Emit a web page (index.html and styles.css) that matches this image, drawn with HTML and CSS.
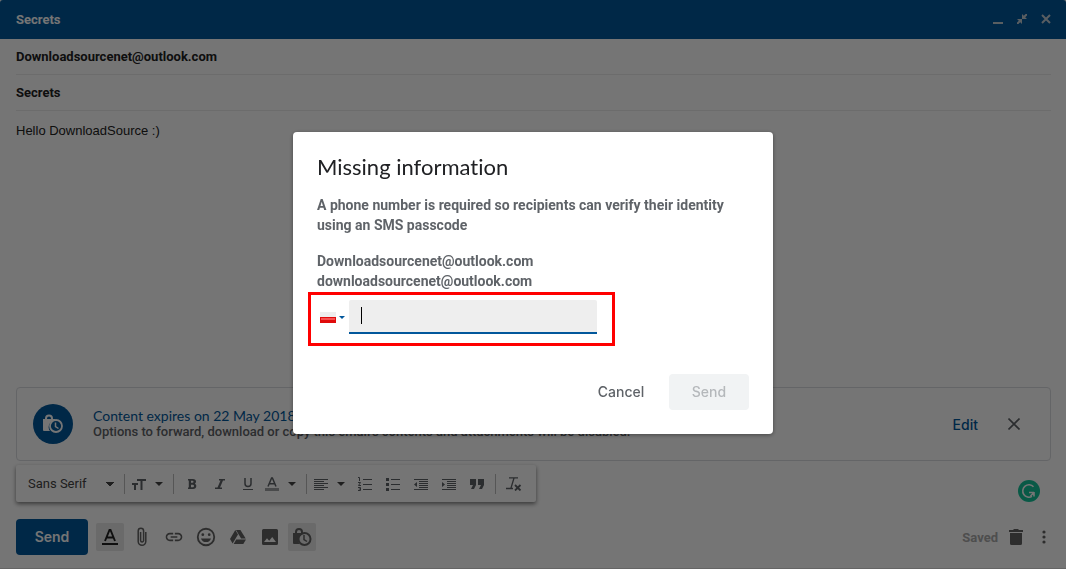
FILE: index.html
```html
<!DOCTYPE html>
<html lang="en">

<head>
    <meta charset="UTF-8">
    <meta name="viewport" content="width=device-width, initial-scale=1.0">
    <title>Secrets</title>
    <link rel="stylesheet" href="styles.css">
</head>

<body>
    <div class="compose">
        <div class="compose-header">
            <h1 class="compose-title">Secrets</h1>
            <div class="window-buttons">
                <button type="button" class="window-btn" aria-label="Minimise">
                    <svg width="10" height="10" viewBox="0 0 10 10"><path d="M0 8h10v2H0z"/></svg>
                </button>
                <button type="button" class="window-btn" aria-label="Exit full screen">
                    <svg width="10" height="10" viewBox="0 0 10 10"><path d="M5 0v5h5L8.200 3.200 10 1.400V0H8.600L6.800 1.800zM5 10V5H0l1.800 1.800L0 8.600V10h1.400l1.800-1.800z"/></svg>
                </button>
                <button type="button" class="window-btn" aria-label="Close">
                    <svg width="10" height="10" viewBox="0 0 10 10"><path d="M1 1l8 8M9 1L1 9" stroke="currentColor" stroke-width="2"/></svg>
                </button>
            </div>
        </div>

        <div class="compose-main">
            <div class="field">Downloadsourcenet@outlook.com</div>
            <div class="field">Secrets</div>
            <div class="message">Hello DownloadSource :)</div>

            <!-- confidential mode -->
            <div class="expiry">
                <div class="expiry-icon">
                    <svg width="22" height="22" viewBox="0 0 22 22">
                        <path d="M1 6h2V5.500a4 4 0 0 1 8 0V6h2v1.200A6.800 6.800 0 0 0 8 18H2a1 1 0 0 1-1-1zM5 6h4v-.5a2 2 0 0 0-4 0z"/>
                        <circle cx="14" cy="13" r="6" fill="none" stroke="currentColor" stroke-width="1.800"/>
                        <path d="M13.500 9.500v4l3 2" fill="none" stroke="currentColor" stroke-width="1.500"/>
                    </svg>
                </div>
                <div class="expiry-text">
                    <p class="expiry-date">Content expires on 22 May 2018.</p>
                    <p class="expiry-note">Options to forward, download or copy this email's contents and attachments will be disabled.</p>
                </div>
                <button type="button" class="expiry-edit">Edit</button>
                <button type="button" class="expiry-close" aria-label="Remove">
                    <svg width="12" height="12" viewBox="0 0 12 12"><path d="M.5.5l11 11M11.500.5l-11 11" stroke="currentColor" stroke-width="1.600"/></svg>
                </button>
            </div>

            <div class="format-row">
                <div class="format-bar">
                    <select class="font-select" aria-label="Font">
                        <option>Sans Serif</option>
                    </select>
                    <span class="sep"></span>
                    <button type="button" class="tool tool-drop tool-size" aria-label="Size">
                        <svg width="14" height="12" viewBox="0 0 14 12"><path d="M5 1h9v2h-3.500v9h-2V3H5zM0 5h6v2H4v5H2V7H0z"/></svg>
                        <span class="arrow"></span>
                    </button>
                    <span class="sep"></span>
                    <button type="button" class="tool tool-bold" aria-label="Bold">
                        <svg width="10" height="12" viewBox="0 0 10 12"><path fill-rule="evenodd" d="M1 1h4.800C8 1 9 2.200 9 3.600c0 1-.5 1.700-1.200 2.100.9.4 1.500 1.200 1.500 2.300C9.300 9.800 8 11 6 11H1V9.500h.8v-7H1zM4 2.800v2h1.500a1 1 0 0 0 0-2zM4 6.800v2.400h1.800a1.200 1.200 0 0 0 0-2.400z"/></svg>
                    </button>
                    <button type="button" class="tool" aria-label="Italic">
                        <svg width="10" height="12" viewBox="0 0 10 12"><path d="M4 1h6v1.500H8L5 9.500h2V11H0V9.500h2.500l3-7H4z"/></svg>
                    </button>
                    <button type="button" class="tool" aria-label="Underline">
                        <svg width="10" height="12" viewBox="0 0 10 12"><path d="M0 11h10v1H0z"/><path d="M2 0v5.500a3 3 0 0 0 6 0V0" fill="none" stroke="currentColor" stroke-width="1.500"/></svg>
                    </button>
                    <button type="button" class="tool tool-drop tool-color" aria-label="Text colour">
                        <svg width="14" height="14" viewBox="0 0 14 14"><path d="M0 11h14v3H0z" opacity=".6"/><path d="M3 9.500L6.600 1h.8L11 9.500M4.200 6.800h5.600" fill="none" stroke="currentColor" stroke-width="1.500"/></svg>
                        <span class="arrow"></span>
                    </button>
                    <span class="sep"></span>
                    <button type="button" class="tool tool-drop" aria-label="Align">
                        <svg width="14" height="12" viewBox="0 0 14 12"><path d="M0 1h14v1H0zM0 3h10v1H0zM0 5h14v1H0zM0 7h10v1H0zM0 9h14v1H0zM0 11h10v1H0z"/></svg>
                        <span class="arrow"></span>
                    </button>
                    <button type="button" class="tool" aria-label="Numbered list">
                        <svg width="14" height="14" viewBox="0 0 14 14"><path d="M5 2h9v1H5zM5 7h9v1H5zM5 12h9v1H5z"/><path d="M0 .5h1.500V4M0 5.500h2.500L.5 8.500H3M0 10.500h2.500v3H0M.8 12h1.700" fill="none" stroke="currentColor"/></svg>
                    </button>
                    <button type="button" class="tool" aria-label="Bulleted list">
                        <svg width="14" height="14" viewBox="0 0 14 14"><path d="M0 1h3v3H0zM0 6h3v3H0zM0 11h3v3H0zM5 2h9v1H5zM5 7h9v1H5zM5 12h9v1H5z"/></svg>
                    </button>
                    <button type="button" class="tool" aria-label="Indent less">
                        <svg width="14" height="12" viewBox="0 0 14 12"><path d="M0 1h14v1H0zM5 3h9v1H5zM5 5h9v1H5zM5 7h9v1H5zM5 9h9v1H5zM0 11h14v1H0zM3 4v5L0 6.500z"/></svg>
                    </button>
                    <button type="button" class="tool" aria-label="Indent more">
                        <svg width="14" height="12" viewBox="0 0 14 12"><path d="M0 1h14v1H0zM5 3h9v1H5zM5 5h9v1H5zM5 7h9v1H5zM5 9h9v1H5zM0 11h14v1H0zM0 4v5l3-2.500z"/></svg>
                    </button>
                    <button type="button" class="tool" aria-label="Quote">
                        <svg width="14" height="12" viewBox="0 0 14 12"><path d="M0 1h6v6l-2 4H1l2-4H0zM8 1h6v6l-2 4H9l2-4H8z"/></svg>
                    </button>
                    <span class="sep sep-clear"></span>
                    <button type="button" class="tool" aria-label="Remove formatting">
                        <svg width="16" height="14" viewBox="0 0 16 14"><path d="M3 .8h9M8 1L5 11M0 11.500h7" fill="none" stroke="currentColor" stroke-width="1.300"/><path d="M9 8l5.500 5.500M14.500 8L9 13.500" stroke="currentColor" stroke-width="1.800"/></svg>
                    </button>
                </div>
                <button type="button" class="checker" aria-label="Check writing">
                    <svg width="22" height="22" viewBox="0 0 22 22"><circle cx="11" cy="11" r="11" fill="#15c39a"/><path d="M15.500 6.800A6.200 6.200 0 1 0 14 16.400" fill="none" stroke="#fff" stroke-width="1.600"/><path d="M11 12.500h5M16 12v4.500M16 12.500l-3.500 3.500" fill="none" stroke="#fff" stroke-width="1.600"/></svg>
                </button>
            </div>

            <div class="actions">
                <button type="button" class="send">Send</button>
                <div class="action-icons">
                    <button type="button" class="action active dark" aria-label="Formatting options">
                        <svg width="16" height="18" viewBox="0 0 16 18"><path d="M0 15h16v2H0z"/><path d="M3 13L7.500 2h1L13 13M4.500 9.500h7" fill="none" stroke="currentColor" stroke-width="1.900"/></svg>
                    </button>
                    <button type="button" class="action" aria-label="Attach files">
                        <svg width="10" height="20" viewBox="0 0 10 20"><path d="M8.800 5v9.500a3.800 3.800 0 0 1-7.600 0V4a2.700 2.700 0 0 1 5.400 0v9.500a1.500 1.500 0 0 1-3 0V5" fill="none" stroke="currentColor" stroke-width="1.500"/></svg>
                    </button>
                    <button type="button" class="action" aria-label="Insert link">
                        <svg width="20" height="20" viewBox="0 0 24 24"><path d="M3.900 12c0-1.710 1.390-3.100 3.100-3.100h4V7H7c-2.760 0-5 2.240-5 5s2.240 5 5 5h4v-1.900H7c-1.710 0-3.100-1.390-3.100-3.100zM8 13h8v-2H8v2zm9-6h-4v1.900h4c1.710 0 3.100 1.390 3.100 3.100s-1.390 3.100-3.100 3.100h-4V17h4c2.760 0 5-2.240 5-5s-2.240-5-5-5z"/></svg>
                    </button>
                    <button type="button" class="action" aria-label="Insert emoji">
                        <svg width="22" height="22" viewBox="0 0 24 24"><circle cx="12" cy="12" r="9" fill="none" stroke="currentColor" stroke-width="2"/><circle cx="8.500" cy="9.500" r="1.500"/><circle cx="15.500" cy="9.500" r="1.500"/><path d="M6.500 13.500h11a5.800 5.800 0 0 1-11 0z"/></svg>
                    </button>
                    <button type="button" class="action" aria-label="Insert from Drive">
                        <svg width="16" height="14" viewBox="0 0 16 14"><path d="M5.300 0L0 9l2.600 4.500L8 4.500zM6 0h4.400l5.300 8.500h-4.600zM6.200 9.500H16L13.300 14H3.700z"/></svg>
                    </button>
                    <button type="button" class="action" aria-label="Insert photo">
                        <svg width="16" height="16" viewBox="0 0 16 16"><path fill-rule="evenodd" d="M1.500 0h13A1.500 1.500 0 0 1 16 1.500v13a1.500 1.500 0 0 1-1.500 1.500h-13A1.500 1.500 0 0 1 0 14.500v-13A1.500 1.500 0 0 1 1.500 0zM2 13h12l-3.800-5-3 3.800L5 9.300z"/></svg>
                    </button>
                    <button type="button" class="action active" aria-label="Confidential mode">
                        <svg width="20" height="20" viewBox="0 0 20 20">
                            <path d="M1 6h2V5a4 4 0 0 1 8 0v1h2v1A6.500 6.500 0 0 0 7.500 17H2a1 1 0 0 1-1-1zM5 6h4V5a2 2 0 0 0-4 0z"/>
                            <circle cx="12.500" cy="12" r="6" fill="none" stroke="currentColor" stroke-width="2"/>
                            <path d="M12 8v4.500l3 2" fill="none" stroke="currentColor" stroke-width="1.500"/>
                        </svg>
                    </button>
                </div>
                <span class="saved">Saved</span>
                <button type="button" class="action" aria-label="Discard draft">
                    <svg width="14" height="16" viewBox="0 0 14 16"><path d="M0 1h4l1-1h4l1 1h4v2H0zM1 4h12v10.500a1.500 1.500 0 0 1-1.500 1.500h-9A1.500 1.500 0 0 1 1 14.500z"/></svg>
                </button>
                <button type="button" class="action more" aria-label="More options">
                    <svg width="4" height="14" viewBox="0 0 4 14"><circle cx="2" cy="2" r="1.600"/><circle cx="2" cy="7" r="1.600"/><circle cx="2" cy="12" r="1.600"/></svg>
                </button>
            </div>
        </div>
    </div>

    <!-- dialog -->
    <div class="mask">
        <div class="dialog" role="dialog" aria-labelledby="dialog-title">
            <h2 id="dialog-title" class="dialog-title">Missing information</h2>
            <p class="dialog-text">A phone number is required so recipients can verify their identity using an SMS passcode</p>
            <label for="phone" class="dialog-text recipient">Downloadsourcenet@outlook.com<br>downloadsourcenet@outlook.com</label>
            <div class="phone-row">
                <button type="button" class="country" aria-label="Country">
                    <svg width="16" height="11" viewBox="0 0 16 11"><path fill="#eee" d="M0 0h16v5H0z"/><path fill="#e00b0b" d="M0 5h16v6H0z"/><path fill="#f75050" d="M1 6h14v2H1z"/></svg>
                    <span class="country-arrow"></span>
                </button>
                <div class="phone-box">
                    <input type="tel" id="phone" class="phone-input">
                    <span class="caret"></span>
                </div>
            </div>
            <div class="dialog-buttons">
                <button type="button" class="dialog-btn">Cancel</button>
                <button type="button" class="dialog-btn dialog-send" disabled>Send</button>
            </div>
        </div>
    </div>
</body>

</html>
```

FILE: styles.css
```css
* {
    box-sizing: border-box;
}

body,
h1,
h2,
p {
    margin: 0;
}

body {
    font-family: Roboto, "Liberation Sans", sans-serif;
    font-size: 13px;
    color: #222;
    background: #fff;
}

button {
    margin: 0;
    padding: 0;
    border: none;
    background: none;
    font-family: inherit;
    color: inherit;
}

svg {
    display: block;
    flex: none;
    fill: currentColor;
}

.compose {
    display: flex;
    flex-direction: column;
    min-height: 100vh;
    border-bottom: 1px solid #ddd;
}

.compose-header {
    display: flex;
    justify-content: space-between;
    align-items: center;
    height: 39px;
    padding: 0 15px 1px 16px;
    background: #01579b;
    color: #fff;
    border-radius: 3px 3px 0 0;
}

.compose-title {
    font-size: 13px;
    font-weight: 700;
}

.window-buttons {
    display: flex;
    gap: 14px;
    color: #c3ccd4;
}

.compose-main {
    display: flex;
    flex-direction: column;
    flex: 1;
    padding: 0 15px 13px 16px;
}

.field {
    height: 36px;
    line-height: 35px;
    font-weight: 700;
    border-bottom: 1px solid #ebebeb;
}

.message {
    flex: 1;
    padding-top: 10px;
    font-family: "Liberation Sans", Arial, sans-serif;
    line-height: 20px;
}

/* confidential mode */
.expiry {
    display: flex;
    align-items: center;
    height: 74px;
    padding: 0 30px 0 16px;
    border: 1px solid #dadce0;
    border-radius: 4px;
}

.expiry-icon {
    display: flex;
    align-items: center;
    justify-content: center;
    width: 40px;
    height: 40px;
    margin-right: 20px;
    border-radius: 50%;
    background: #01579b;
    color: #fff;
}

.expiry-text {
    flex: 1;
}

.expiry-date {
    font-family: Lato, sans-serif;
    font-size: 14px;
    line-height: 16px;
    color: #01579b;
}

.expiry-note {
    font-size: 13px;
    line-height: 16px;
    font-weight: 500;
    color: #5f6368;
}

.expiry-edit {
    margin-right: 30px;
    font-family: Inter, sans-serif;
    font-size: 14px;
    font-weight: 500;
    color: #01579b;
}

.expiry-close {
    color: #5f6368;
}

/* formatting bar */
.format-row {
    display: flex;
    justify-content: space-between;
    align-items: flex-end;
    margin: 4px 0 17px;
    padding-right: 11px;
}

.format-bar {
    display: flex;
    align-items: center;
    width: 520px;
    height: 37px;
    padding-left: 12px;
    border-radius: 2px;
    color: #5f6368;
    box-shadow: 0 2px 4px rgba(0, 0, 0, .5);
}

.font-select {
    width: 96px;
    height: 28px;
    padding: 0;
    border: none;
    appearance: none;
    font-family: inherit;
    font-size: 13px;
    color: #444;
    background: conic-gradient(from -45deg at 50% 100%, #444 90deg, transparent 0) no-repeat right 10px center / 8px 4px;
}

.sep {
    width: 1px;
    height: 20px;
    background: #bbb;
}

.tool {
    display: flex;
    align-items: center;
    justify-content: center;
    width: 28px;
    height: 28px;
}

.tool-drop {
    justify-content: flex-start;
    width: 44px;
    padding-left: 7px;
    gap: 9px;
}

.tool-size {
    width: 48px;
}

.tool-color {
    padding-left: 3px;
}

.tool-bold {
    margin-left: 4px;
}

.sep-clear {
    margin: 0 4px;
}

.arrow {
    border: 4px solid transparent;
    border-top-color: #444;
    border-bottom: none;
}

.checker {
    border-radius: 50%;
}

/* bottom row */
.actions {
    display: flex;
    align-items: center;
}

.send {
    width: 72px;
    height: 36px;
    padding-bottom: 2px;
    margin-right: 8px;
    border-radius: 4px;
    background: #01579b;
    color: #fff;
    font-family: Inter, sans-serif;
    font-size: 14px;
    font-weight: 600;
}

.action-icons {
    display: flex;
    gap: 4px;
    flex: 1;
}

.action {
    display: flex;
    align-items: center;
    justify-content: center;
    width: 28px;
    height: 28px;
    border-radius: 2px;
    color: #636363;
}

.active {
    background: #e6e6e6;
}

.dark {
    color: #222;
}

.saved {
    margin-right: 4px;
    font-weight: 700;
    color: #aaa;
}

.more {
    width: 14px;
    margin-left: 7px;
}

/* dialog */
.mask {
    position: fixed;
    inset: 0;
    display: flex;
    align-items: center;
    justify-content: center;
    background: rgba(0, 0, 0, .54);
}

.dialog {
    width: 480px;
    margin-bottom: 3px;
    padding: 23px 24px 24px;
    border-radius: 4px;
    background: #fff;
    box-shadow: 0 1px 4px rgba(0, 0, 0, .4);
}

.dialog-title {
    margin-bottom: 16px;
    font-family: Lato, sans-serif;
    font-size: 22px;
    line-height: 24px;
    font-weight: 400;
    font-variant-ligatures: none;
    color: #202124;
}

.dialog-text {
    display: block;
    margin-bottom: 16px;
    font-size: 14px;
    line-height: 20px;
    font-weight: 700;
    color: #5f6368;
}

.recipient {
    margin-bottom: 1px;
}

.phone-row {
    display: flex;
    align-items: center;
    width: 307px;
    height: 54px;
    margin: 0 0 28px -9px;
    padding: 0 15px 4px 9px;
    border: 3px solid #f00;
}

.country {
    display: flex;
    align-items: center;
    gap: 3px;
    margin-right: 4px;
}

.country-arrow {
    border: 3px solid transparent;
    border-top-color: #01579b;
    border-bottom: none;
}

.phone-box {
    position: relative;
    flex: 1;
}

.phone-input {
    display: block;
    width: 100%;
    height: 34px;
    padding: 0 12px;
    border: none;
    border-bottom: 2px solid #01579b;
    border-radius: 2px 2px 0 0;
    background: #eee;
    font-size: 14px;
    outline: none;
}

.caret {
    position: absolute;
    top: 7px;
    left: 12px;
    width: 1px;
    height: 17px;
    background: #000;
}

.dialog-buttons {
    display: flex;
    justify-content: flex-end;
    gap: 8px;
}

.dialog-btn {
    width: 80px;
    height: 36px;
    padding-bottom: 2px;
    border-radius: 4px;
    font-family: Inter, sans-serif;
    font-size: 14px;
    font-weight: 500;
    color: #5f6368;
}

.dialog-send {
    background: #f1f3f4;
    color: #b5b8bb;
}
```
